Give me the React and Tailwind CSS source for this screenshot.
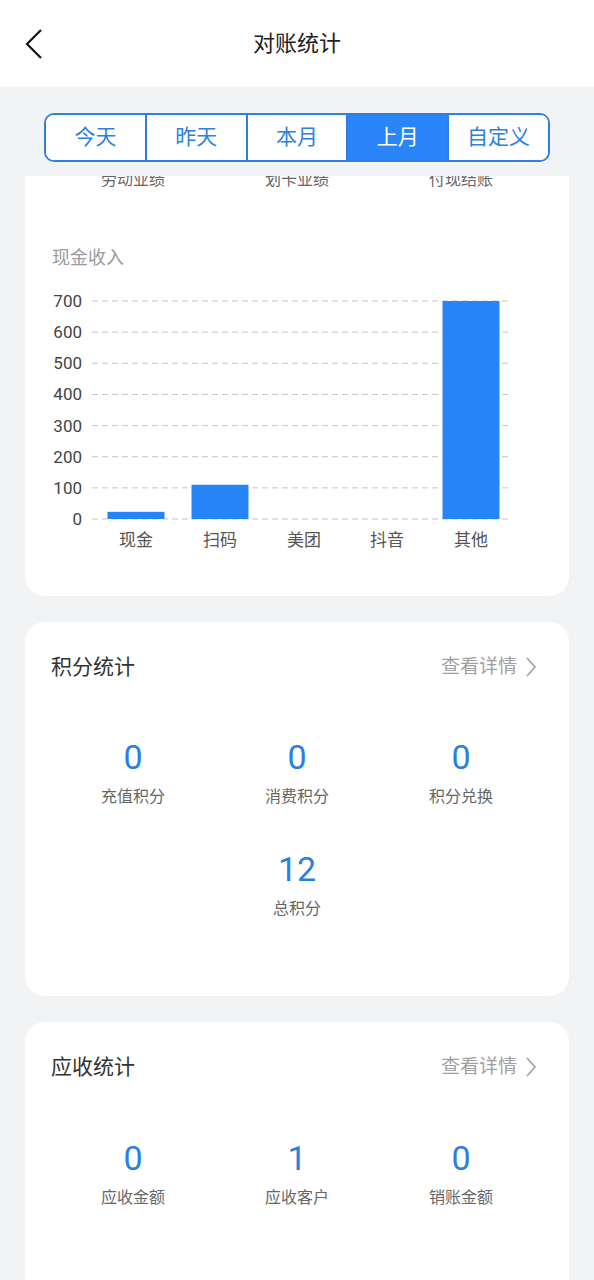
import React from "react";

const FONT = { fontFamily: 'Roboto, "Noto Sans CJK SC", "Noto Sans", sans-serif' };

function Chevron({ className }) {
  return (
    <svg className={className} width="12" height="22" viewBox="0 0 12 22" fill="none">
      <polyline points="2,2 10,11 2,20" stroke="#a0a0a0" strokeWidth="1.6" fill="none" />
    </svg>
  );
}

function Chart() {
  const y0 = 248;
  const step = 31.14;
  const ticks = [0, 100, 200, 300, 400, 500, 600, 700];
  const cats = [
    { name: "现金", v: 23, cx: 111 },
    { name: "扫码", v: 110, cx: 195 },
    { name: "美团", v: 0, cx: 279 },
    { name: "抖音", v: 0, cx: 362 },
    { name: "其他", v: 700, cx: 446 },
  ];
  return (
    <svg width="544" height="290" viewBox="0 0 544 290" style={FONT}>
      {ticks.map((t, i) => {
        const y = y0 - i * step;
        return (
          <g key={t}>
            <line x1="67" x2="487" y1={y} y2={y} stroke="#c4c4c4" strokeWidth="1" strokeDasharray="6 4" />
            <text x="57" y={y} textAnchor="end" dominantBaseline="central" fontSize="17" fill="#444">
              {t}
            </text>
          </g>
        );
      })}
      {cats.map((c) => {
        const h = (c.v / 100) * step;
        return (
          <g key={c.name}>
            {c.v > 0 && <rect x={c.cx - 28.5} y={y0 - h} width="57" height={h} fill="#2784f7" />}
            <text x={c.cx} y="269" textAnchor="middle" dominantBaseline="central" fontSize="17" fill="#555">
              {c.name}
            </text>
          </g>
        );
      })}
    </svg>
  );
}

function Stat({ value, label }) {
  return (
    <div className="flex flex-col items-center">
      <div className="text-[34px] leading-[40px] text-[#2b7fe0]">{value}</div>
      <div className="mt-[8px] text-[16px] leading-[24px] text-[#666]">{label}</div>
    </div>
  );
}

function CardHeader({ title }) {
  return (
    <div className="flex items-center justify-between pl-[26px] pr-[32px]">
      <div className="text-[21px] leading-[30px] text-[#333]">{title}</div>
      <div className="flex items-center gap-[8px] text-[19px] leading-[30px] text-[#a0a0a0]">
        <span>查看详情</span>
        <Chevron />
      </div>
    </div>
  );
}

export default function App() {
  const tabs = ["今天", "昨天", "本月", "上月", "自定义"];
  return (
    <div className="min-h-[1280px] bg-[#f2f3f5]" style={FONT}>
      <div className="relative flex h-[87px] items-center justify-center bg-white">
        <svg className="absolute left-[22px] top-[28px]" width="24" height="32" viewBox="0 0 24 32" fill="none">
          <polyline points="19,2 5,16 19,30" stroke="#111" strokeWidth="2.2" fill="none" />
        </svg>
        <div className="text-[22px] text-[#222]">对账统计</div>
      </div>

      <div className="px-[44px] pt-[26px] pb-[14px]">
        <div className="flex h-[49px] overflow-hidden rounded-[10px] border-2 border-[#2e80dc]">
          {tabs.map((t, i) => (
            <div
              key={t}
              className={
                "flex flex-1 items-center justify-center text-[21px] " +
                (i === 3 ? "bg-[#2a86f8] text-white " : "bg-white text-[#2e80dc] ") +
                (i > 0 ? "border-l-2 border-[#2e80dc]" : "")
              }
            >
              {t}
            </div>
          ))}
        </div>
      </div>

      <div className="mx-[25px] overflow-hidden rounded-b-[20px] bg-white pb-[35px]">
        <div className="mt-[-8px] grid grid-cols-3 px-[26px] text-[16px] leading-[24px] text-[#666]">
          <div className="text-center">劳动业绩</div>
          <div className="text-center">划卡业绩</div>
          <div className="text-center">付现结账</div>
        </div>
        <div className="mt-[53px] pl-[27px] text-[18px] leading-[26px] text-[#9a9a9a]">现金收入</div>
        <Chart />
      </div>

      <div className="mx-[25px] mt-[26px] rounded-[20px] bg-white pt-[30px] pb-[75px]">
        <CardHeader title="积分统计" />
        <div className="mt-[55px] grid grid-cols-3 px-[26px]">
          <Stat value="0" label="充值积分" />
          <Stat value="0" label="消费积分" />
          <Stat value="0" label="积分兑换" />
        </div>
        <div className="mt-[40px] grid grid-cols-3 px-[26px]">
          <div />
          <Stat value="12" label="总积分" />
          <div />
        </div>
      </div>

      <div className="mx-[25px] mt-[26px] rounded-[20px] bg-white pt-[30px] pb-[90px]">
        <CardHeader title="应收统计" />
        <div className="mt-[56px] grid grid-cols-3 px-[26px]">
          <Stat value="0" label="应收金额" />
          <Stat value="1" label="应收客户" />
          <Stat value="0" label="销账金额" />
        </div>
      </div>
    </div>
  );
}
